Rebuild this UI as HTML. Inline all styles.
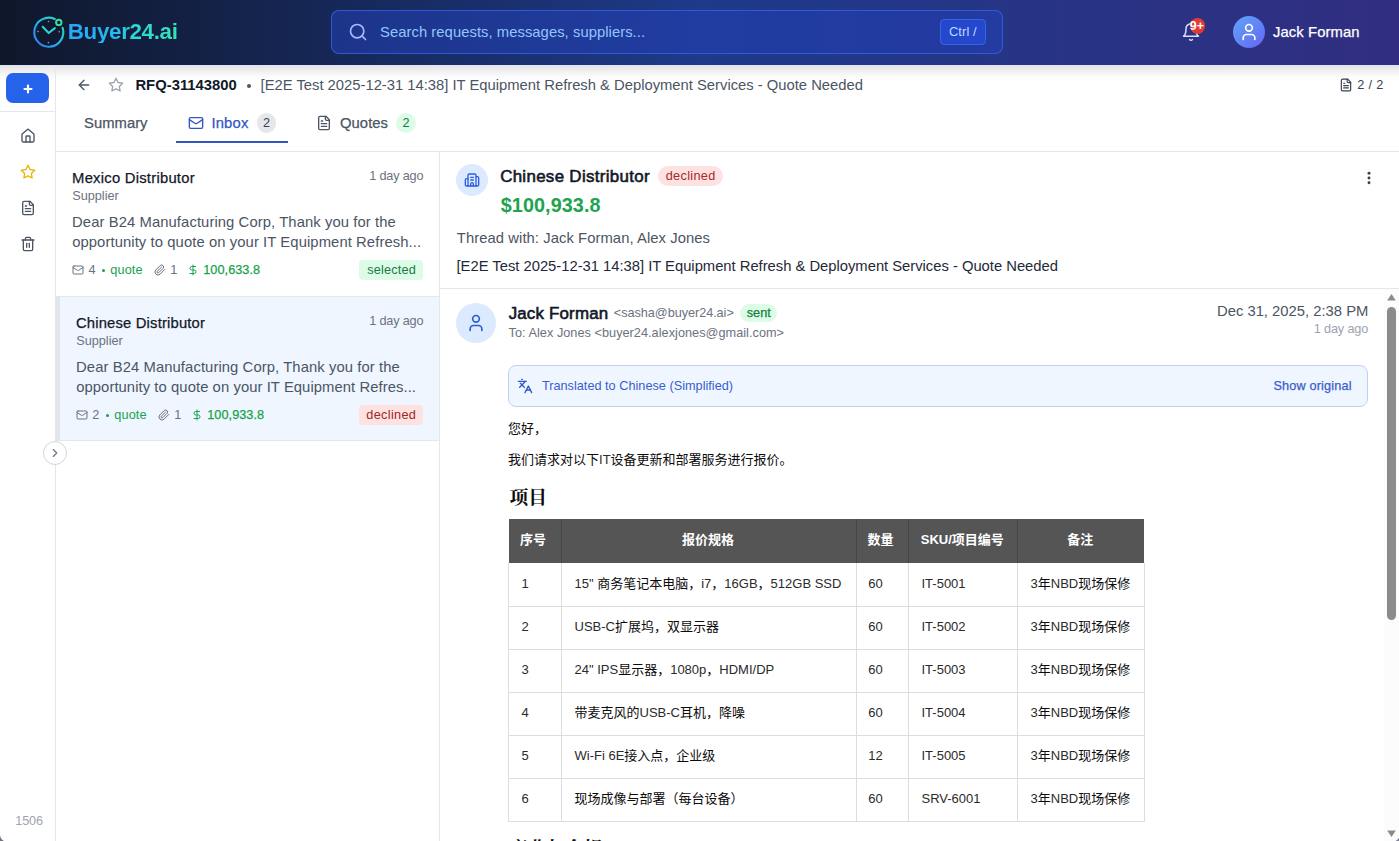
<!DOCTYPE html>
<html lang="en"><head><meta charset="utf-8"><title>Buyer24.ai - RFQ-31143800</title>
<style>
*{box-sizing:border-box}
html,body{margin:0;padding:0}
body{width:1399px;height:841px;overflow:hidden;background:#fff;font-family:"Liberation Sans","Noto Sans CJK SC",sans-serif;color:#111827}
.a{position:absolute}
.t{position:absolute;white-space:nowrap;line-height:1}
svg.ic{position:absolute;fill:none;stroke:currentColor;stroke-width:2;stroke-linecap:round;stroke-linejoin:round;overflow:visible}
.hl{position:absolute;height:1px;background:#e5e7eb}
.vl{position:absolute;width:1px;background:#e5e7eb}
.em{position:absolute;white-space:nowrap;font-size:13px;line-height:18px;color:#2a2a2a;font-family:"Liberation Sans","Noto Sans CJK SC",sans-serif}
.em .cj{color:#0c0c0c}
.em.hd{font-family:"Liberation Serif","Noto Serif CJK SC",serif;font-weight:700}
.th{position:absolute;white-space:nowrap;font-size:13px;line-height:18px;color:#fff;font-weight:700;text-align:center;font-family:"Liberation Sans","Noto Sans CJK SC",sans-serif}
.tl{position:absolute;background:#ddd}
#root{position:relative;width:1399px;height:841px;overflow:hidden;background:#fff}
</style></head><body><div id="root">
<!-- ======================= top bar ======================= -->
<div class="a" style="left:0;top:0;width:1399px;height:65px;background:linear-gradient(90deg,#0f172a 0%,#1e3a8a 50%,#312e81 100%)"></div>
<div class="a" style="left:0;top:65px;width:1399px;height:1px;background:#dde4fb"></div>
<div class="a" style="left:0;top:66px;width:1399px;height:15px;background:linear-gradient(180deg,rgba(0,0,0,.105),rgba(0,0,0,.05) 40%,rgba(0,0,0,.012) 75%,rgba(0,0,0,0))"></div>
<!-- logo -->
<svg class="a" style="left:30px;top:14px" width="38" height="38" viewBox="30 14 38 38" fill="none">
<defs><linearGradient id="lg1" x1="34" y1="46" x2="64" y2="18" gradientUnits="userSpaceOnUse"><stop offset="0" stop-color="#2f7bea"/><stop offset=".5" stop-color="#22b8f0"/><stop offset="1" stop-color="#34dba0"/></linearGradient></defs>
<path d="M 54.79 19.05 A 14.5 14.5 0 1 0 62.59 27.77" stroke="url(#lg1)" stroke-width="2.1" stroke-linecap="round"/>
<circle cx="58.8" cy="22.4" r="2.7" stroke="#3be0a5" stroke-width="1.9"/>
<path d="M42.7 26.8 L48.7 33 L54.9 28.1" stroke="#2bd9d0" stroke-width="2" stroke-linecap="round" stroke-linejoin="round"/>
<g fill="#9ec5f5" opacity=".8"><circle cx="48.5" cy="21.5" r=".8"/><circle cx="59.2" cy="31.8" r=".8"/><circle cx="48.4" cy="42.6" r=".8"/><circle cx="38" cy="31.6" r=".8"/></g>
</svg>
<!-- search -->
<div class="a" style="left:331px;top:10px;width:672px;height:44px;border-radius:8px;background:rgba(34,64,180,.55);border:1px solid rgba(59,100,235,.75)"></div>
<svg class="ic" style="left:348px;top:22px;color:#a7b8fb" width="20" height="20" viewBox="0 0 24 24"><circle cx="11" cy="11" r="8"/><path d="m21 21-4.3-4.3"/></svg>
<div class="a" style="left:940px;top:19px;width:46px;height:26px;border-radius:4.5px;background:rgba(37,75,215,.8);border:1px solid rgba(59,110,240,.8)"></div>
<!-- bell -->
<svg class="ic" style="left:1181.3px;top:22px;color:#d5e0ff;stroke-width:1.8" width="20" height="20" viewBox="0 0 24 24"><path d="M6 8a6 6 0 0 1 12 0c0 7 3 9 3 9H3s3-2 3-9"/><path d="M10.3 21a1.94 1.94 0 0 0 3.4 0"/></svg>
<div class="a" style="left:1189.6px;top:18.2px;width:15.6px;height:15.6px;border-radius:8px;background:#e23b33"></div>
<!-- avatar -->
<div class="a" style="left:1233px;top:16px;width:32px;height:32px;border-radius:16px;background:linear-gradient(135deg,#60a5fa,#6366f1)"></div>
<svg class="ic" style="left:1239px;top:22px;color:#fff" width="20" height="20" viewBox="0 0 24 24"><path d="M19 21v-2a4 4 0 0 0-4-4H9a4 4 0 0 0-4 4v2"/><circle cx="12" cy="7" r="4"/></svg>

<!-- ======================= left rail ======================= -->
<div class="vl" style="left:55px;top:66px;height:775px"></div>
<div class="a" style="left:6px;top:73px;width:43px;height:30px;border-radius:7px;background:#2563eb"></div>
<svg class="ic" style="left:21.7px;top:83px;color:#fff;stroke-width:4.4" width="12" height="12" viewBox="0 0 24 24"><path d="M5 12h14"/><path d="M12 5v14"/></svg>
<div class="hl" style="left:0;top:111px;width:55px"></div>
<svg class="ic" style="left:20px;top:128px;color:#4b5563" width="16" height="16" viewBox="0 0 24 24"><path d="M15 21v-8a1 1 0 0 0-1-1h-4a1 1 0 0 0-1 1v8"/><path d="M3 10a2 2 0 0 1 .709-1.528l7-5.999a2 2 0 0 1 2.582 0l7 5.999A2 2 0 0 1 21 10v9a2 2 0 0 1-2 2H5a2 2 0 0 1-2-2z"/></svg>
<svg class="ic" style="left:20px;top:164px;color:#eab308" width="16" height="16" viewBox="0 0 24 24"><polygon points="12 2 15.09 8.26 22 9.27 17 14.14 18.18 21.02 12 17.77 5.82 21.02 7 14.14 2 9.27 8.91 8.26 12 2"/></svg>
<svg class="ic" style="left:20px;top:200px;color:#4b5563" width="16" height="16" viewBox="0 0 24 24"><path d="M15 2H6a2 2 0 0 0-2 2v16a2 2 0 0 0 2 2h12a2 2 0 0 0 2-2V7Z"/><path d="M14 2v4a2 2 0 0 0 2 2h4"/><path d="M10 9H8"/><path d="M16 13H8"/><path d="M16 17H8"/></svg>
<svg class="ic" style="left:20px;top:236px;color:#4b5563" width="16" height="16" viewBox="0 0 24 24"><path d="M3 6h18"/><path d="M19 6v14c0 1-1 2-2 2H7c-1 0-2-1-2-2V6"/><path d="M8 6V4c0-1 1-2 2-2h4c1 0 2 1 2 2v2"/><line x1="10" x2="10" y1="11" y2="17"/><line x1="14" x2="14" y1="11" y2="17"/></svg>
<!-- expander -->
<div class="a" style="left:43px;top:441px;width:24px;height:24px;border-radius:12px;background:#fff;border:1px solid #d1d5db"></div>
<svg class="ic" style="left:48px;top:446px;color:#6b7280" width="14" height="14" viewBox="0 0 24 24"><path d="m9 18 6-6-6-6"/></svg>

<!-- ======================= sub header ======================= -->
<svg class="ic" style="left:76px;top:77px;color:#4b5563" width="16" height="16" viewBox="0 0 24 24"><path d="m12 19-7-7 7-7"/><path d="M19 12H5"/></svg>
<svg class="ic" style="left:108px;top:77px;color:#9ca3af" width="16" height="16" viewBox="0 0 24 24"><polygon points="12 2 15.09 8.26 22 9.27 17 14.14 18.18 21.02 12 17.77 5.82 21.02 7 14.14 2 9.27 8.91 8.26 12 2"/></svg>
<div class="a" style="left:246.9px;top:84px;width:4.4px;height:4.4px;border-radius:2.2px;background:#4b5563"></div>
<svg class="ic" style="left:1339px;top:78px;color:#374151" width="14" height="14" viewBox="0 0 24 24"><path d="M15 2H6a2 2 0 0 0-2 2v16a2 2 0 0 0 2 2h12a2 2 0 0 0 2-2V7Z"/><path d="M14 2v4a2 2 0 0 0 2 2h4"/><path d="M10 9H8"/><path d="M16 13H8"/><path d="M16 17H8"/></svg>
<!-- tabs -->
<svg class="ic" style="left:188px;top:115px;color:#3156c4" width="16" height="16" viewBox="0 0 24 24"><rect width="20" height="16" x="2" y="4" rx="2"/><path d="m22 7-8.97 5.7a1.94 1.94 0 0 1-2.06 0L2 7"/></svg>
<div class="a" style="left:257px;top:113px;width:19.4px;height:19.6px;border-radius:10px;background:#e5e7eb"></div>
<div class="a" style="left:176px;top:141px;width:112px;height:2px;background:#3156c4"></div>
<svg class="ic" style="left:316px;top:115px;color:#4b5563" width="16" height="16" viewBox="0 0 24 24"><path d="M15 2H6a2 2 0 0 0-2 2v16a2 2 0 0 0 2 2h12a2 2 0 0 0 2-2V7Z"/><path d="M14 2v4a2 2 0 0 0 2 2h4"/><path d="M10 9H8"/><path d="M16 13H8"/><path d="M16 17H8"/></svg>
<div class="a" style="left:396.2px;top:113px;width:19.4px;height:19.6px;border-radius:10px;background:#dcfce7"></div>
<div class="hl" style="left:56px;top:151px;width:1343px"></div>

<!-- ======================= conversation list ======================= -->
<div class="vl" style="left:439px;top:152px;height:689px"></div>
<!-- item 1 -->
<svg class="ic" style="left:72px;top:264px;color:#6b7280" width="12" height="12" viewBox="0 0 24 24"><rect width="20" height="16" x="2" y="4" rx="2"/><path d="m22 7-8.97 5.7a1.94 1.94 0 0 1-2.06 0L2 7"/></svg>
<div class="a" style="left:101.5px;top:268.6px;width:3.2px;height:3.2px;border-radius:2px;background:#16a34a"></div>
<svg class="ic" style="left:154px;top:264px;color:#6b7280" width="12" height="12" viewBox="0 0 24 24"><path d="m21.44 11.05-9.19 9.19a6 6 0 0 1-8.49-8.49l8.57-8.57A4 4 0 1 1 18 8.84l-8.59 8.57a2 2 0 0 1-2.83-2.83l8.49-8.48"/></svg>
<svg class="ic" style="left:187px;top:264px;color:#16a34a" width="12" height="12" viewBox="0 0 24 24"><line x1="12" x2="12" y1="2" y2="22"/><path d="M17 5H9.5a3.5 3.5 0 0 0 0 7h5a3.5 3.5 0 0 1 0 7H6"/></svg>
<div class="a" style="left:359px;top:260px;width:64px;height:20px;border-radius:4px;background:#dcfce7"></div>
<!-- item 2 (active) -->
<div class="a" style="left:56px;top:296px;width:383px;height:145px;background:#eff6ff;border-left:4px solid #e2e5ea;border-top:1px solid #e5e7eb;border-bottom:1px solid #e5e7eb"></div>
<svg class="ic" style="left:76px;top:409px;color:#6b7280" width="12" height="12" viewBox="0 0 24 24"><rect width="20" height="16" x="2" y="4" rx="2"/><path d="m22 7-8.97 5.7a1.94 1.94 0 0 1-2.06 0L2 7"/></svg>
<div class="a" style="left:105.5px;top:413.6px;width:3.2px;height:3.2px;border-radius:2px;background:#16a34a"></div>
<svg class="ic" style="left:158px;top:409px;color:#6b7280" width="12" height="12" viewBox="0 0 24 24"><path d="m21.44 11.05-9.19 9.19a6 6 0 0 1-8.49-8.49l8.57-8.57A4 4 0 1 1 18 8.84l-8.59 8.57a2 2 0 0 1-2.83-2.83l8.49-8.48"/></svg>
<svg class="ic" style="left:191px;top:409px;color:#16a34a" width="12" height="12" viewBox="0 0 24 24"><line x1="12" x2="12" y1="2" y2="22"/><path d="M17 5H9.5a3.5 3.5 0 0 0 0 7h5a3.5 3.5 0 0 1 0 7H6"/></svg>
<div class="a" style="left:359px;top:405px;width:64px;height:20px;border-radius:4px;background:#fee2e2"></div>

<!-- ======================= thread header ======================= -->
<div class="a" style="left:456px;top:164px;width:32px;height:32px;border-radius:16px;background:#dbeafe"></div>
<svg class="ic" style="left:464px;top:172px;color:#2f5fe0" width="16" height="16" viewBox="0 0 24 24"><path d="M10 12h4"/><path d="M10 8h4"/><path d="M14 21v-3a2 2 0 0 0-4 0v3"/><path d="M6 10H4a2 2 0 0 0-2 2v7a2 2 0 0 0 2 2h16a2 2 0 0 0 2-2V9a2 2 0 0 0-2-2h-2"/><path d="M6 21V5a2 2 0 0 1 2-2h8a2 2 0 0 1 2 2v16"/></svg>
<div class="a" style="left:658px;top:166px;width:65px;height:20px;border-radius:10px;background:#fee2e2"></div>
<svg class="a" style="left:1361px;top:170px" width="16" height="16" viewBox="0 0 24 24" fill="#374151"><circle cx="12" cy="5" r="2.2"/><circle cx="12" cy="12" r="2.2"/><circle cx="12" cy="19" r="2.2"/></svg>
<div class="hl" style="left:440px;top:288px;width:959px"></div>

<!-- ======================= message ======================= -->
<div class="a" style="left:456px;top:303px;width:40px;height:40px;border-radius:20px;background:#dbeafe"></div>
<svg class="ic" style="left:466px;top:313px;color:#2f5bd7" width="20" height="20" viewBox="0 0 24 24"><path d="M19 21v-2a4 4 0 0 0-4-4H9a4 4 0 0 0-4 4v2"/><circle cx="12" cy="7" r="4"/></svg>
<div class="a" style="left:740px;top:304px;width:37px;height:18px;border-radius:9px;background:#dcfce7"></div>
<div class="a" style="left:508px;top:365px;width:860px;height:42px;border-radius:8px;background:#eff6ff;border:1px solid #bcd3f6"></div>
<svg class="ic" style="left:517px;top:378px;color:#3158c8" width="16" height="16" viewBox="0 0 24 24"><path d="m5 8 6 6"/><path d="m4 14 6-6 2-3"/><path d="M2 5h12"/><path d="M7 2h1"/><path d="m22 22-5-10-5 10"/><path d="M14 18h6"/></svg>

<!-- email body -->
<div class="em" style="left:508px;top:420px"><span class="cj">您好，</span></div>
<div class="em" style="left:508px;top:451px"><span class="cj">我们请求对以下</span>IT<span class="cj">设备更新和部署服务进行报价。</span></div>
<div class="em hd" style="left:509.6px;top:485px;font-size:18.72px;line-height:26px;color:#222"><span class="cj">项目</span></div>

<!-- table -->
<div class="a" style="left:509px;top:519px;width:635px;height:44px;background:#555"></div>
<div class="tl" style="left:561px;top:519px;width:1px;height:44px;background:#474747"></div>
<div class="tl" style="left:856px;top:519px;width:1px;height:44px;background:#474747"></div>
<div class="tl" style="left:908px;top:519px;width:1px;height:44px;background:#474747"></div>
<div class="tl" style="left:1017px;top:519px;width:1px;height:44px;background:#474747"></div>
<!-- vertical lines -->
<div class="tl" style="left:508px;top:563px;width:1px;height:259px"></div>
<div class="tl" style="left:561px;top:563px;width:1px;height:259px"></div>
<div class="tl" style="left:856px;top:563px;width:1px;height:259px"></div>
<div class="tl" style="left:908px;top:563px;width:1px;height:259px"></div>
<div class="tl" style="left:1017px;top:563px;width:1px;height:259px"></div>
<div class="tl" style="left:1144px;top:563px;width:1px;height:259px"></div>
<!-- horizontal lines -->
<div class="tl" style="left:508px;top:606px;width:637px;height:1px"></div>
<div class="tl" style="left:508px;top:649px;width:637px;height:1px"></div>
<div class="tl" style="left:508px;top:692px;width:637px;height:1px"></div>
<div class="tl" style="left:508px;top:735px;width:637px;height:1px"></div>
<div class="tl" style="left:508px;top:778px;width:637px;height:1px"></div>
<div class="tl" style="left:508px;top:821px;width:637px;height:1px"></div>
<!-- header cells -->
<div class="th" style="left:507px;top:531px;width:52px">序号</div>
<div class="th" style="left:561px;top:531px;width:294px">报价规格</div>
<div class="th" style="left:855px;top:531px;width:51px">数量</div>
<div class="th" style="left:908.3px;top:531px;width:108px">SKU/项目编号</div>
<div class="th" style="left:1017.3px;top:531px;width:126px">备注</div>
<!-- rows -->
<div class="em" style="left:521.5px;top:574.5px">1</div>
<div class="em" style="left:574.5px;top:574.5px">15" <span class="cj">商务笔记本电脑，</span>i7<span class="cj">，</span>16GB<span class="cj">，</span>512GB SSD</div>
<div class="em" style="left:868.2px;top:574.5px">60</div>
<div class="em" style="left:921.5px;top:574.5px">IT-5001</div>
<div class="em" style="left:1030.5px;top:574.5px">3<span class="cj">年</span>NBD<span class="cj">现场保修</span></div>

<div class="em" style="left:521.5px;top:617.5px">2</div>
<div class="em" style="left:574.5px;top:617.5px">USB-C<span class="cj">扩展坞，双显示器</span></div>
<div class="em" style="left:868.2px;top:617.5px">60</div>
<div class="em" style="left:921.5px;top:617.5px">IT-5002</div>
<div class="em" style="left:1030.5px;top:617.5px">3<span class="cj">年</span>NBD<span class="cj">现场保修</span></div>

<div class="em" style="left:521.5px;top:660.5px">3</div>
<div class="em" style="left:574.5px;top:660.5px">24" IPS<span class="cj">显示器，</span>1080p<span class="cj">，</span>HDMI/DP</div>
<div class="em" style="left:868.2px;top:660.5px">60</div>
<div class="em" style="left:921.5px;top:660.5px">IT-5003</div>
<div class="em" style="left:1030.5px;top:660.5px">3<span class="cj">年</span>NBD<span class="cj">现场保修</span></div>

<div class="em" style="left:521.5px;top:703.5px">4</div>
<div class="em" style="left:574.5px;top:703.5px"><span class="cj">带麦克风的</span>USB-C<span class="cj">耳机，降噪</span></div>
<div class="em" style="left:868.2px;top:703.5px">60</div>
<div class="em" style="left:921.5px;top:703.5px">IT-5004</div>
<div class="em" style="left:1030.5px;top:703.5px">3<span class="cj">年</span>NBD<span class="cj">现场保修</span></div>

<div class="em" style="left:521.5px;top:746.5px">5</div>
<div class="em" style="left:574.5px;top:746.5px">Wi-Fi 6E<span class="cj">接入点，企业级</span></div>
<div class="em" style="left:868.2px;top:746.5px">12</div>
<div class="em" style="left:921.5px;top:746.5px">IT-5005</div>
<div class="em" style="left:1030.5px;top:746.5px">3<span class="cj">年</span>NBD<span class="cj">现场保修</span></div>

<div class="em" style="left:521.5px;top:789.5px">6</div>
<div class="em" style="left:574.5px;top:789.5px"><span class="cj">现场成像与部署（每台设备）</span></div>
<div class="em" style="left:868.2px;top:789.5px">60</div>
<div class="em" style="left:921.5px;top:789.5px">SRV-6001</div>
<div class="em" style="left:1030.5px;top:789.5px">3<span class="cj">年</span>NBD<span class="cj">现场保修</span></div>

<div class="em hd" style="left:509px;top:836px;font-size:18.72px;line-height:26px;color:#222"><span class="cj">商业与合规</span></div>

<!-- scrollbar -->
<div class="a" style="left:1384px;top:289px;width:15px;height:552px;background:#fcfcfc"></div>
<svg class="a" style="left:1384px;top:289px" width="15" height="15" viewBox="0 0 15 15"><path d="M3.2 11.4 L7.5 5 L11.8 11.4 Z" fill="#8b8b8b"/></svg>
<div class="a" style="left:1387px;top:306.5px;width:9px;height:313.5px;border-radius:4.5px;background:#8b8b8b"></div>
<svg class="a" style="left:1384px;top:827.7px" width="15" height="15" viewBox="0 0 15 15"><path d="M3.2 2.6 L7.5 9 L11.8 2.6 Z" fill="#8b8b8b"/></svg>

<!-- window corners -->
<svg class="a" style="left:0;top:834.5px" width="6.5" height="6.5" viewBox="0 0 8 8"><path d="M0 0 A8 8 0 0 0 8 8 L0 8 Z" fill="#70747e"/></svg>
<svg class="a" style="left:1392.5px;top:834.5px" width="6.5" height="6.5" viewBox="0 0 8 8"><path d="M8 0 A8 8 0 0 1 0 8 L8 8 Z" fill="#7d8296"/></svg>

<!-- ======================= text layer ======================= -->
<span class="t" style="left:67.80px;top:21.01px;font-size:22.4px;color:transparent;letter-spacing:-0.353px;font-weight:700;background:linear-gradient(90deg,#2aa6f8 0%,#29b6f3 42%,#2bd6da 58%,#35e5b6 100%);-webkit-background-clip:text;background-clip:text;">Buyer24.ai</span>
<span class="t" style="left:380.03px;top:25.01px;font-size:14.8px;color:#93c5fd;letter-spacing:0.048px;">Search requests, messages, suppliers...</span>
<span class="t" style="left:948.95px;top:26.01px;font-size:12.8px;color:#bfdbfe;letter-spacing:0.127px;">Ctrl /</span>
<span class="t" style="left:1189.77px;top:20.01px;font-size:12.4px;color:#fff;font-weight:700;">9+</span>
<span class="t" style="left:1272.97px;top:25.01px;font-size:14.8px;color:#fff;letter-spacing:0.098px;-webkit-text-stroke:.25px;">Jack Forman</span>
<span class="t" style="left:135.41px;top:78.01px;font-size:14.8px;color:#111827;letter-spacing:0.019px;font-weight:700;">RFQ-31143800</span>
<span class="t" style="left:260.54px;top:78.01px;font-size:14.8px;color:#4b5563;letter-spacing:-0.009px;">[E2E Test 2025-12-31 14:38] IT Equipment Refresh &amp; Deployment Services - Quote Needed</span>
<span class="t" style="left:1357.36px;top:79.02px;font-size:12.7px;color:#374151;letter-spacing:0.322px;">2 / 2</span>
<span class="t" style="left:84.03px;top:116.01px;font-size:14.8px;color:#4b5563;letter-spacing:0.031px;-webkit-text-stroke:.25px;">Summary</span>
<span class="t" style="left:211.43px;top:116.01px;font-size:14.8px;color:#3156c4;letter-spacing:0.180px;-webkit-text-stroke:.25px;">Inbox</span>
<span class="t" style="left:263.07px;top:117.02px;font-size:12.7px;color:#374151;">2</span>
<span class="t" style="left:340.00px;top:116.01px;font-size:14.8px;color:#4b5563;letter-spacing:0.063px;-webkit-text-stroke:.25px;">Quotes</span>
<span class="t" style="left:402.47px;top:117.02px;font-size:12.7px;color:#15803d;">2</span>
<span class="t" style="left:72.09px;top:171.01px;font-size:14.8px;color:#111827;letter-spacing:0.244px;-webkit-text-stroke:.25px;">Mexico Distributor</span>
<span class="t" style="left:72.22px;top:190.00px;font-size:12.7px;color:#6b7280;">Supplier</span>
<span class="t" style="left:369.23px;top:170.00px;font-size:12.7px;color:#6b7280;letter-spacing:-0.179px;">1 day ago</span>
<span class="t" style="left:72.09px;top:215.01px;font-size:14.8px;color:#4b5563;letter-spacing:0.089px;">Dear B24 Manufacturing Corp, Thank you for the</span>
<span class="t" style="left:72.18px;top:235.01px;font-size:14.8px;color:#4b5563;letter-spacing:0.088px;">opportunity to quote on your IT Equipment Refresh...</span>
<span class="t" style="left:88.51px;top:264.02px;font-size:12.7px;color:#6b7280;">4</span>
<span class="t" style="left:110.27px;top:264.02px;font-size:12.7px;color:#16a34a;letter-spacing:0.137px;">quote</span>
<span class="t" style="left:170.23px;top:264.02px;font-size:12.7px;color:#6b7280;">1</span>
<span class="t" style="left:203.23px;top:264.02px;font-size:12.7px;color:#16a34a;letter-spacing:0.058px;-webkit-text-stroke:.25px;">100,633.8</span>
<span class="t" style="left:367.15px;top:264.02px;font-size:12.7px;color:#197a45;letter-spacing:0.201px;">selected</span>
<span class="t" style="left:75.95px;top:316.01px;font-size:14.8px;color:#111827;letter-spacing:0.176px;-webkit-text-stroke:.25px;">Chinese Distributor</span>
<span class="t" style="left:76.22px;top:335.02px;font-size:12.7px;color:#6b7280;">Supplier</span>
<span class="t" style="left:369.23px;top:315.02px;font-size:12.7px;color:#6b7280;letter-spacing:-0.179px;">1 day ago</span>
<span class="t" style="left:76.09px;top:360.01px;font-size:14.8px;color:#4b5563;letter-spacing:0.089px;">Dear B24 Manufacturing Corp, Thank you for the</span>
<span class="t" style="left:76.18px;top:380.01px;font-size:14.8px;color:#4b5563;letter-spacing:0.073px;">opportunity to quote on your IT Equipment Refres...</span>
<span class="t" style="left:92.16px;top:409.02px;font-size:12.7px;color:#6b7280;">2</span>
<span class="t" style="left:114.27px;top:409.02px;font-size:12.7px;color:#16a34a;letter-spacing:0.137px;">quote</span>
<span class="t" style="left:174.23px;top:409.02px;font-size:12.7px;color:#6b7280;">1</span>
<span class="t" style="left:207.23px;top:409.02px;font-size:12.7px;color:#16a34a;letter-spacing:0.058px;-webkit-text-stroke:.25px;">100,933.8</span>
<span class="t" style="left:366.37px;top:409.02px;font-size:12.7px;color:#a02525;letter-spacing:0.312px;">declined</span>
<span class="t" style="left:500.14px;top:169.01px;font-size:16.9px;color:#111827;letter-spacing:0.322px;-webkit-text-stroke:.6px;">Chinese Distributor</span>
<span class="t" style="left:665.67px;top:170.00px;font-size:12.7px;color:#a82828;letter-spacing:0.341px;">declined</span>
<span class="t" style="left:500.74px;top:196.01px;font-size:19.8px;color:#1ea34f;letter-spacing:0.084px;font-weight:700;">$100,933.8</span>
<span class="t" style="left:456.87px;top:231.01px;font-size:14.8px;color:#4b5563;letter-spacing:0.064px;">Thread with: Jack Forman, Alex Jones</span>
<span class="t" style="left:456.54px;top:259.01px;font-size:14.8px;color:#1f2937;letter-spacing:-0.021px;">[E2E Test 2025-12-31 14:38] IT Equipment Refresh &amp; Deployment Services - Quote Needed</span>
<span class="t" style="left:508.64px;top:306.01px;font-size:16.9px;color:#111827;letter-spacing:0.194px;-webkit-text-stroke:.6px;">Jack Forman</span>
<span class="t" style="left:613.87px;top:307.02px;font-size:12.7px;color:#6b7280;letter-spacing:-0.051px;">&lt;sasha@buyer24.ai&gt;</span>
<span class="t" style="left:746.65px;top:307.02px;font-size:12.7px;color:#15803d;letter-spacing:0.054px;-webkit-text-stroke:.25px;">sent</span>
<span class="t" style="left:508.61px;top:327.02px;font-size:12.7px;color:#6b7280;letter-spacing:0.037px;">To: Alex Jones &lt;buyer24.alexjones@gmail.com&gt;</span>
<span class="t" style="left:1216.99px;top:304.01px;font-size:14.8px;color:#4b5563;">Dec 31, 2025, 2:38 PM</span>
<span class="t" style="left:1313.63px;top:323.02px;font-size:12.7px;color:#9ca3af;letter-spacing:-0.129px;">1 day ago</span>
<span class="t" style="left:541.91px;top:380.02px;font-size:12.7px;color:#3860cc;letter-spacing:0.016px;">Translated to Chinese (Simplified)</span>
<span class="t" style="left:1273.42px;top:380.02px;font-size:12.7px;color:#3860cc;letter-spacing:0.163px;-webkit-text-stroke:.25px;">Show original</span>
<span class="t" style="left:15.24px;top:815.01px;font-size:12.6px;color:#a1a3b0;letter-spacing:-0.073px;">1506</span>
</div></body></html>
